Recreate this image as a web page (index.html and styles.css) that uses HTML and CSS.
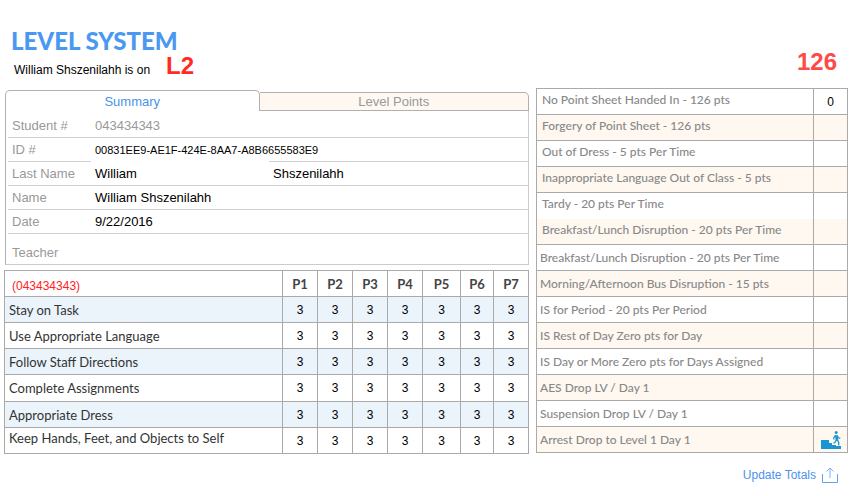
FILE: index.html
```html
<!DOCTYPE html>
<html lang="en">
<head>
    <meta charset="UTF-8">
    <meta name="viewport" content="width=device-width, initial-scale=1.0">
    <title>Level System</title>
    <link rel="stylesheet" href="styles.css">
</head>
<body>

    <header class="page-header">
        <div>
            <h1>LEVEL SYSTEM</h1>
            <p class="status">William Shszenilahh is on <strong class="level">L2</strong></p>
        </div>
        <p class="total">126</p>
    </header>

    <main class="columns">
        <div class="left">
            <section class="summary">
                <div class="tabs" role="tablist">
                    <button type="button" class="tab active" role="tab" aria-selected="true">Summary</button>
                    <button type="button" class="tab" role="tab" aria-selected="false">Level Points</button>
                </div>
                <dl class="details">
                    <div class="row first"><dt>Student #</dt><dd class="muted">043434343</dd></div>
                    <div class="row id-row"><dt>ID #</dt><dd class="small">00831EE9-AE1F-424E-8AA7-A8B6655583E9</dd></div>
                    <div class="row"><dt>Last Name</dt><dd class="first-name">William</dd><dd>Shszenilahh</dd></div>
                    <div class="row"><dt>Name</dt><dd>William Shszenilahh</dd></div>
                    <div class="row"><dt>Date</dt><dd>9/22/2016</dd></div>
                    <div class="row teacher"><dt>Teacher</dt><dd></dd></div>
                </dl>
            </section>

            <table class="grid scores">
                <colgroup>
                    <col>
                    <col class="period"><col class="period"><col class="period"><col class="period">
                    <col class="period-wide"><col class="period-narrow"><col class="period">
                </colgroup>
                <thead>
                    <tr><th scope="col" class="student-id">(043434343)</th><th scope="col">P1</th><th scope="col">P2</th><th scope="col">P3</th><th scope="col">P4</th><th scope="col">P5</th><th scope="col">P6</th><th scope="col">P7</th></tr>
                </thead>
                <tbody>
                    <tr><th scope="row">Stay on Task</th><td>3</td><td>3</td><td>3</td><td>3</td><td>3</td><td>3</td><td>3</td></tr>
                    <tr><th scope="row">Use Appropriate Language</th><td>3</td><td>3</td><td>3</td><td>3</td><td>3</td><td>3</td><td>3</td></tr>
                    <tr><th scope="row">Follow Staff Directions</th><td>3</td><td>3</td><td>3</td><td>3</td><td>3</td><td>3</td><td>3</td></tr>
                    <tr class="tall"><th scope="row">Complete Assignments</th><td>3</td><td>3</td><td>3</td><td>3</td><td>3</td><td>3</td><td>3</td></tr>
                    <tr><th scope="row">Appropriate Dress</th><td>3</td><td>3</td><td>3</td><td>3</td><td>3</td><td>3</td><td>3</td></tr>
                    <tr class="last"><th scope="row">Keep Hands, Feet, and Objects to Self</th><td>3</td><td>3</td><td>3</td><td>3</td><td>3</td><td>3</td><td>3</td></tr>
                </tbody>
            </table>
        </div>

        <div class="right">
            <table class="grid penalties">
                <colgroup><col><col class="count"></colgroup>
                <tbody class="points">
                    <tr><th scope="row">No Point Sheet Handed In - 126 pts</th><td>0</td></tr>
                    <tr><th scope="row">Forgery of Point Sheet - 126 pts</th><td></td></tr>
                    <tr><th scope="row">Out of Dress - 5 pts Per Time</th><td></td></tr>
                    <tr><th scope="row">Inappropriate Language Out of Class - 5 pts</th><td></td></tr>
                    <tr class="open"><th scope="row">Tardy - 20 pts Per Time</th><td></td></tr>
                    <tr><th scope="row">Breakfast/Lunch Disruption - 20 pts Per Time</th><td></td></tr>
                </tbody>
                <tbody>
                    <tr><th scope="row">Breakfast/Lunch Disruption - 20 pts Per Time</th><td></td></tr>
                    <tr><th scope="row">Morning/Afternoon Bus Disruption - 15 pts</th><td></td></tr>
                    <tr><th scope="row">IS for Period - 20 pts Per Period</th><td></td></tr>
                    <tr><th scope="row">IS Rest of Day Zero pts for Day</th><td></td></tr>
                    <tr><th scope="row">IS Day or More Zero pts for Days Assigned</th><td></td></tr>
                    <tr><th scope="row">AES Drop LV / Day 1</th><td></td></tr>
                    <tr><th scope="row">Suspension Drop LV / Day 1</th><td></td></tr>
                    <tr>
                        <th scope="row">Arrest Drop to Level 1 Day 1</th>
                        <td>
                            <svg class="stairs" width="20" height="18" viewBox="0 0 20 18" aria-hidden="true">
                                <path fill="#1b95d1" d="M0 9h8v3h3v2h4v1h5v3H0z"/>
                                <circle cx="15.200" cy="1.600" r="1.500" fill="#1b95d1"/>
                                <path d="M15.300 4.200l.7 4.800" fill="none" stroke="#1b95d1" stroke-width="2.600"/>
                                <path d="M14.800 4.200l-2 2.300v2M16 4.500l1.500 2.300 1.800.6M15.500 8.500l-1.500 2.700-1.500 1M16.300 8.500l1.400 3v3" fill="none" stroke="#1b95d1" stroke-width="1.300"/>
                            </svg>
                        </td>
                    </tr>
                </tbody>
            </table>

            <button type="button" class="update">
                Update Totals
                <svg width="16" height="17" viewBox="0 0 16 17" fill="none" stroke="#5ba4f2" aria-hidden="true">
                    <path d="M.5 7v8.500h15V7"/>
                    <path d="M8 11V1M4.500 4.500L8 1l3.500 3.500" stroke="#79b4f4"/>
                </svg>
            </button>
        </div>
    </main>

</body>
</html>
```

FILE: styles.css
```css
body {
    margin: 0;
    padding: 27px 20px 0 4px;
    background: #fff;
    color: #000;
    font-family: "Liberation Sans", Arial, sans-serif;
    font-size: 13px;
}

.page-header {
    display: flex;
    justify-content: space-between;
    align-items: flex-end;
    height: 61px;
    padding: 0 11px 0 7px;
    box-sizing: border-box;
}

h1 {
    margin: 0;
    color: #4a98f0;
    font-family: Lato, sans-serif;
    font-size: 24px;
    font-weight: 900;
    line-height: 30px;
}

.status {
    display: flex;
    align-items: baseline;
    gap: 16px;
    margin: 0 0 8px;
    padding-left: 3px;
    font-size: 12px;
    line-height: 20px;
}

.level {
    color: #ff2a24;
    font-size: 24px;
}

.total {
    margin: 0 0 12px;
    color: #ff4a48;
    font-size: 24px;
    font-weight: 700;
    line-height: 28px;
}

.columns {
    display: grid;
    grid-template-columns: 525fr 312fr;
    gap: 7px;
    align-items: start;
}

/* Summary card */
.summary {
    margin: 2px 0 5px 1px;
}

.tabs {
    display: flex;
    align-items: flex-end;
}

.tab {
    flex: 270;
    height: 19px;
    padding: 0;
    border: 1px solid #b0b0b0;
    border-left: 0;
    border-radius: 0 5px 0 0;
    background: #fef8f1;
    color: #999;
    font-family: inherit;
    font-size: 13px;
    line-height: 15px;
    cursor: pointer;
}

.tab.active {
    flex: 254;
    height: 21px;
    border-left: 1px solid #b0b0b0;
    border-bottom: 0;
    border-radius: 5px 5px 0 0;
    background: #fff;
    color: #4a92ec;
}

.details {
    margin: 0;
    padding-left: 2px;
    border: 1px solid #ccc;
    border-top: 0;
    border-left-color: #b0b0b0;
}

.row {
    display: flex;
    height: 24px;
    box-sizing: border-box;
    border-bottom: 1px solid #d0d0d0;
    line-height: 24px;
}

.row.first {
    height: 27px;
    line-height: 29px;
}

/* the rule under the ID row breaks between label and surname */
.row.id-row {
    border-bottom-color: transparent;
    background:
        linear-gradient(#d0d0d0, #d0d0d0) left bottom / 83px 1px no-repeat border-box,
        linear-gradient(#d0d0d0, #d0d0d0) 261px bottom / 100% 1px no-repeat border-box;
}

.row.teacher {
    height: 30px;
    border-bottom: 0;
    line-height: 37px;
}

.row dt {
    width: 87px;
    padding-left: 4px;
    box-sizing: border-box;
    color: #999;
}

.row dd {
    margin: 0;
}

.row .muted {
    color: #999;
}

.row .small {
    font-size: 11px;
}

.row .first-name {
    width: 178px;
}

/* Tables */
.grid {
    width: 100%;
    border-collapse: separate;
    border-spacing: 0;
    table-layout: fixed;
    border-top: 1px solid #aaa;
    border-right: 1px solid #aaa;
}

.grid th,
.grid td {
    height: 26px;
    padding: 0;
    box-sizing: border-box;
    border-left: 1px solid #aaa;
    border-bottom: 1px solid #aaa;
    text-align: center;
    font-family: Lato, sans-serif;
    line-height: 16px;
}

.grid td {
    font-family: "Liberation Sans", Arial, sans-serif;
    font-size: 12px;
}

.grid tbody th {
    padding-left: 4px;
    text-align: left;
    font-size: 12px;
    font-weight: 500;
    white-space: nowrap;
}

.period {
    width: 35px;
}

.period-wide {
    width: 38px;
}

.period-narrow {
    width: 33px;
}

.scores th {
    color: #444;
}

.scores thead th {
    font-size: 13px;
}

.scores tbody th {
    font-size: 13px;
    font-weight: 400;
    color: #333;
}

.scores thead .student-id {
    padding: 4px 0 0 7px;
    color: #f22;
    font-family: "Liberation Sans", Arial, sans-serif;
    font-size: 12px;
    font-weight: 400;
    text-align: left;
}

.scores tbody tr:nth-child(odd) {
    background: #ebf3fb;
}

.scores .tall th,
.scores .tall td {
    height: 27px;
}

.scores .last th {
    padding-bottom: 6px;
}

.count {
    width: 34px;
}

.penalties th {
    color: #888;
}

.penalties tbody th {
    padding-left: 3px;
}

.penalties .points th {
    padding-bottom: 4px;
    padding-left: 5px;
}

.penalties tr:nth-child(even) {
    background: #fef8f1;
}

.penalties .open th,
.penalties .open td {
    border-bottom: 0;
}

.stairs {
    display: block;
    margin: 0 auto;
}

.update {
    display: flex;
    align-items: center;
    gap: 6px;
    margin: 13px 10px 0 auto;
    padding: 0;
    border: 0;
    background: none;
    color: #4a92ec;
    font-family: inherit;
    font-size: 12px;
    line-height: 18px;
    cursor: pointer;
}
```
